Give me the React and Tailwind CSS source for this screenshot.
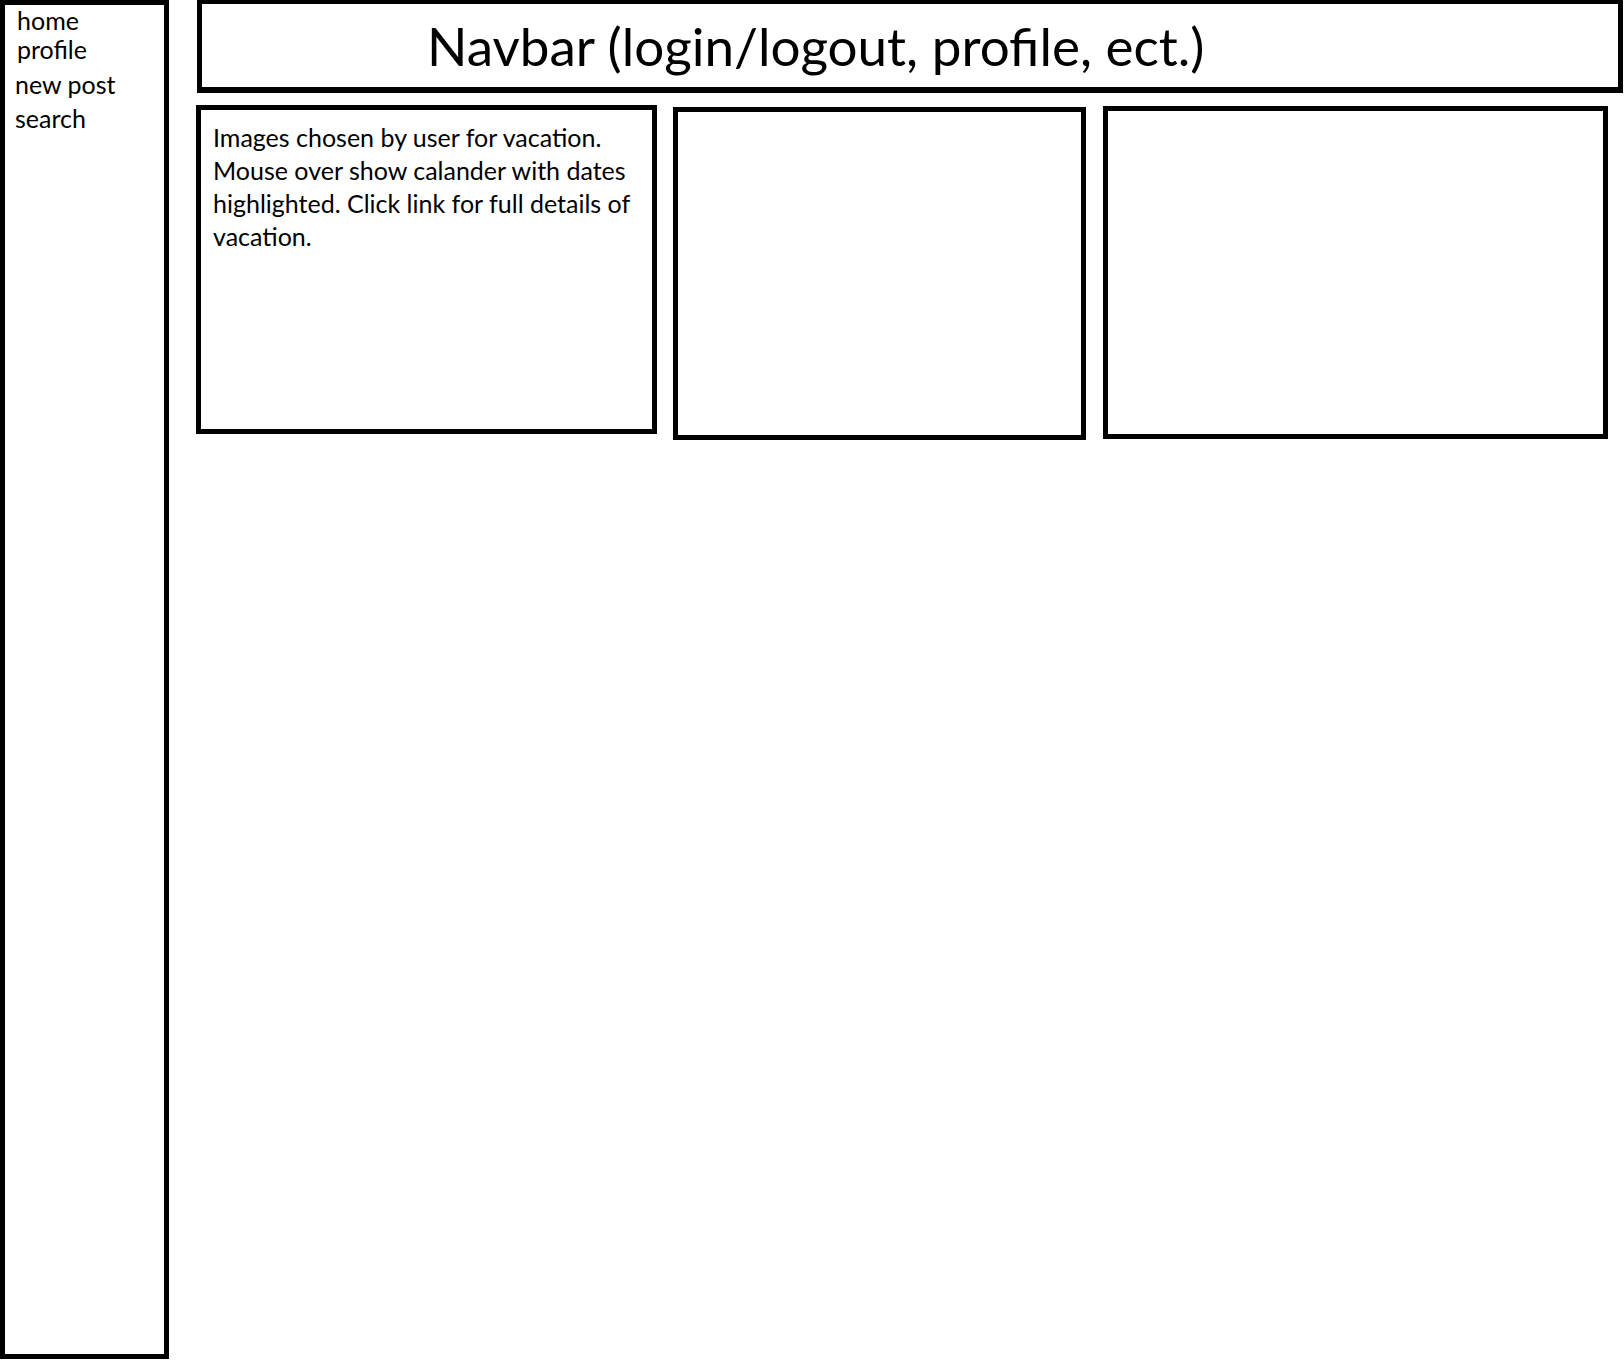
const navItems = [
  { label: 'home', className: 'pl-[12px] leading-[29px]' },
  { label: 'profile', className: 'pl-[12px] leading-[29px]' },
  { label: 'new post', className: 'pl-[10px] leading-[34px] mt-[3px]' },
  { label: 'search', className: 'pl-[10px] leading-[34px]' },
];

const App = () => {
  return (
    <div className="min-h-screen bg-white text-black flex items-start font-['Lato',sans-serif]">
      {/* Sidebar */}
      <aside className="w-[169px] h-[1359px] shrink-0 border-[5px] border-black pt-px">
        {navItems.map((item) => (
          <div key={item.label} className={`text-[25px] ${item.className}`}>
            {item.label}
          </div>
        ))}
      </aside>

      {/* Main */}
      <div className="ml-[28px] flex flex-col">
        <header className="w-[1426px] h-[93px] border-[5px] border-t-4 border-b-[6px] border-black pl-[225px] pt-[15px]">
          <h1 className="text-[53px] leading-[53px]">Navbar (login/logout, profile, ect.)</h1>
        </header>

        <div className="mt-[12px] -ml-px flex items-start gap-4">
          <div className="w-[461px] h-[329px] border-[5px] border-black pl-[12px] pt-[11px]">
            <p className="text-[25px] leading-[33px]">
              Images chosen by user for vacation.
              <br />
              Mouse over show calander with dates
              <br />
              highlighted. Click link for full details of
              <br />
              vacation.
            </p>
          </div>
          <div className="w-[413px] h-[333px] mt-[2px] border-[5px] border-black" />
          <div className="w-[505px] h-[333px] mt-px ml-px border-[5px] border-black" />
        </div>
      </div>
    </div>
  );
};

export default App;
